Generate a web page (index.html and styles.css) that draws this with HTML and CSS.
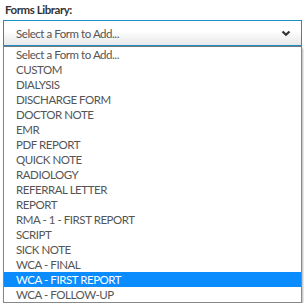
FILE: index.html
```html
<!DOCTYPE html>
<html>
<head>
<meta charset="utf-8">
<link rel="stylesheet" href="styles.css">
</head>
<body>
<div class="field">
  <div class="label">Forms Library:</div>
  <div class="select">
    <span class="select-text">Select a Form to Add...</span>
    <svg class="chev" width="10" height="7" viewBox="0 0 10 7"><path d="M1.5 1.5 L5 4.8 L8.5 1.5" fill="none" stroke="#333" stroke-width="2.2"/></svg>
  </div>
  <ul class="list">
    <li>Select a Form to Add...</li>
    <li>CUSTOM</li>
    <li>DIALYSIS</li>
    <li>DISCHARGE FORM</li>
    <li>DOCTOR NOTE</li>
    <li>EMR</li>
    <li>PDF REPORT</li>
    <li>QUICK NOTE</li>
    <li>RADIOLOGY</li>
    <li>REFERRAL LETTER</li>
    <li>REPORT</li>
    <li>RMA - 1 - FIRST REPORT</li>
    <li>SCRIPT</li>
    <li>SICK NOTE</li>
    <li>WCA - FINAL</li>
    <li class="active">WCA - FIRST REPORT</li>
    <li>WCA - FOLLOW-UP</li>
  </ul>
</div>
</body>
</html>
```
FILE: styles.css
```css
html, body { margin: 0; padding: 0; background: #fff; }
body { font-family: Lato, "Open Sans", sans-serif; font-size: 11.5px; letter-spacing: -0.45px; color: #555; }
.field { padding: 3px 2px 0 3px; }
.label { font-weight: bold; color: #333; font-size: 11.5px; height: 17px; line-height: 14px; padding-left: 2px; }
.select {
  height: 26px;
  border: 1px solid #1d8fc6;
  background: linear-gradient(#ffffff 40%, #e8e8e8);
  display: flex; align-items: center; justify-content: space-between;
  padding: 0 10px 0 12px;
  box-sizing: border-box;
}
.select-text { color: #555; }
.list {
  list-style: none; margin: 0; padding: 0;
  border: 1px solid #888; border-top: 1px solid #777;
  box-shadow: 1px 2px 2px rgba(0,0,0,0.3);
}
.list li { height: 15px; line-height: 15px; padding-left: 12px; color: #555; }
.list li.active { background: #0a8cff; color: #fff; }
```
